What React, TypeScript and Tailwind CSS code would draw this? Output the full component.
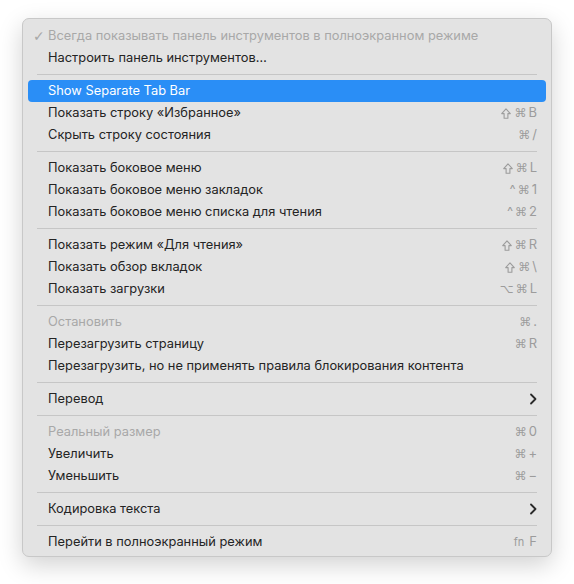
import React from "react";

type Item =
  | { type: "sep" }
  | {
      type: "item";
      label: string;
      shortcut?: string[];
      disabled?: boolean;
      checked?: boolean;
      highlighted?: boolean;
      submenu?: boolean;
    };

const items: Item[] = [
  { type: "item", label: "Всегда показывать панель инструментов в полноэкранном режиме", disabled: true, checked: true },
  { type: "item", label: "Настроить панель инструментов…" },
  { type: "sep" },
  { type: "item", label: "Show Separate Tab Bar", highlighted: true },
  { type: "item", label: "Показать строку «Избранное»", shortcut: ["⇧", "⌘", "B"] },
  { type: "item", label: "Скрыть строку состояния", shortcut: ["⌘", "/"] },
  { type: "sep" },
  { type: "item", label: "Показать боковое меню", shortcut: ["⇧", "⌘", "L"] },
  { type: "item", label: "Показать боковое меню закладок", shortcut: ["^", "⌘", "1"] },
  { type: "item", label: "Показать боковое меню списка для чтения", shortcut: ["^", "⌘", "2"] },
  { type: "sep" },
  { type: "item", label: "Показать режим «Для чтения»", shortcut: ["⇧", "⌘", "R"] },
  { type: "item", label: "Показать обзор вкладок", shortcut: ["⇧", "⌘", "\\"] },
  { type: "item", label: "Показать загрузки", shortcut: ["⌥", "⌘", "L"] },
  { type: "sep" },
  { type: "item", label: "Остановить", disabled: true, shortcut: ["⌘", "."] },
  { type: "item", label: "Перезагрузить страницу", shortcut: ["⌘", "R"] },
  { type: "item", label: "Перезагрузить, но не применять правила блокирования контента" },
  { type: "sep" },
  { type: "item", label: "Перевод", submenu: true },
  { type: "sep" },
  { type: "item", label: "Реальный размер", disabled: true, shortcut: ["⌘", "0"] },
  { type: "item", label: "Увеличить", shortcut: ["⌘", "+"] },
  { type: "item", label: "Уменьшить", shortcut: ["⌘", "−"] },
  { type: "sep" },
  { type: "item", label: "Кодировка текста", submenu: true },
  { type: "sep" },
  { type: "item", label: "Перейти в полноэкранный режим", shortcut: ["fn", "F"] },
];

function Chevron() {
  return (
    <svg width="8" height="12" viewBox="0 0 8 12" fill="none">
      <path d="M2 1.5 L6.5 6 L2 10.5" stroke="#2a2a2a" strokeWidth="1.8" strokeLinecap="round" strokeLinejoin="round" />
    </svg>
  );
}

function ShiftIcon() {
  return (
    <svg width="10" height="11" viewBox="0 0 10 11" fill="none" className="mr-[1px]">
      <path
        d="M5 0.8 L9.3 5.6 L6.9 5.6 L6.9 10.2 L3.1 10.2 L3.1 5.6 L0.7 5.6 Z"
        stroke="#9c9c9c"
        strokeWidth="1.1"
        strokeLinejoin="round"
      />
    </svg>
  );
}

export default function App() {
  return (
    <div className="w-[574px] h-[584px] bg-white pt-[18px] pl-[22px]" style={{ fontFamily: "Inter, 'Noto Sans', sans-serif" }}>
      <div className="w-[530px] rounded-[7px] bg-[#e3e3e3] border border-[#c8c8c8] shadow-[0_8px_24px_rgba(0,0,0,0.18)] pt-[6px] pb-[3px] flex flex-col">
        {items.map((it, i) => {
          if (it.type === "sep") {
            return (
              <div key={i} className="h-[11px] flex items-center px-[14px]">
                <div className="h-px w-full bg-[#c6c6c6]" />
              </div>
            );
          }
          const color = it.highlighted ? "text-white" : it.disabled ? "text-[#a8a8a8]" : "text-[#242424]";
          return (
            <div
              key={i}
              className={`relative h-[22px] mx-[5px] pl-[20px] pr-[9px] flex items-center justify-between rounded-[4px] text-[12.85px] ${color} ${it.highlighted ? "bg-[#2a8ef6]" : ""}`}
            >
              {it.checked && (
                <span className="absolute left-[5px] top-0 h-[22px] flex items-center text-[14px] text-[#a8a8a8]" style={{ fontFamily: "'DejaVu Sans', sans-serif" }}>
                  ✓
                </span>
              )}
              <span className="whitespace-nowrap">{it.label}</span>
              {it.shortcut && (
                <span className="flex items-center gap-[2px] text-[13px] text-[#9c9c9c]" style={{ fontFamily: "Inter, 'DejaVu Sans', sans-serif" }}>
                  {it.shortcut.map((s, j) => {
                    if (s === "⇧") return <ShiftIcon key={j} />;
                    if (s === "⌘" || s === "⌥")
                      return (
                        <span key={j} className="text-[12px]" style={{ fontFamily: "'DejaVu Sans', sans-serif" }}>
                          {s}
                        </span>
                      );
                    if (s === "fn")
                      return (
                        <span key={j} className="mr-[3px] text-[11px]">
                          fn
                        </span>
                      );
                    return <span key={j}>{s}</span>;
                  })}
                </span>
              )}
              {it.submenu && <Chevron />}
            </div>
          );
        })}
      </div>
    </div>
  );
}
